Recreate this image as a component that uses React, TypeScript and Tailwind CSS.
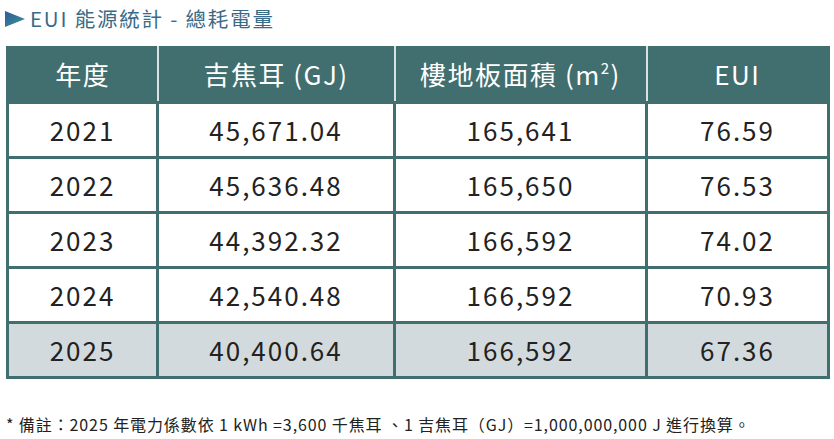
const rows = [
  { year: "2021", gj: "45,671.04", area: "165,641", eui: "76.59" },
  { year: "2022", gj: "45,636.48", area: "165,650", eui: "76.53" },
  { year: "2023", gj: "44,392.32", area: "166,592", eui: "74.02" },
  { year: "2024", gj: "42,540.48", area: "166,592", eui: "70.93" },
  { year: "2025", gj: "40,400.64", area: "166,592", eui: "67.36" },
];

export default function App() {
  return (
    <div className="w-[834px] h-[439px] bg-white overflow-hidden font-['Noto_Sans_CJK_TC','Noto_Sans',sans-serif]">
      {/* title */}
      <div className="flex items-center h-[36px] pl-[5px] pt-[1px]">
        <svg width="20" height="16" viewBox="0 0 20 16" className="mr-[5px]">
          <defs>
            <linearGradient id="tri" x1="0" y1="0" x2="1" y2="1">
              <stop offset="0" stopColor="#2c5c9c" />
              <stop offset="1" stopColor="#3f9294" />
            </linearGradient>
          </defs>
          <polygon points="0,0 20,8 0,16" fill="url(#tri)" />
        </svg>
        <span className="text-[20.5px] leading-none text-[#3a6b86] tracking-[1.8px]">EUI 能源統計 - 總耗電量</span>
      </div>

      {/* table */}
      <div className="pl-[6px] pt-[10px]">
        <table className="border-collapse w-[821px] table-fixed text-center">
          <colgroup>
            <col className="w-[150px]" />
            <col className="w-[237px]" />
            <col className="w-[252px]" />
            <col className="w-[182px]" />
          </colgroup>
          <thead>
            <tr className="bg-[#416e6e] text-white h-[56px] text-[26px] tracking-[1.5px]">
              <th className="font-normal border-x-[3px] border-[#416e6e] border-r-white/80 border-r-[2px]">年度</th>
              <th className="font-normal border-r-[2px] border-white/80">吉焦耳 (GJ)</th>
              <th className="font-normal border-r-[2px] border-white/80">
                樓地板面積 (m<sup className="text-[15px] -top-[11px]">2</sup>)
              </th>
              <th className="font-normal border-r-[3px] border-[#416e6e]">EUI</th>
            </tr>
          </thead>
          <tbody>
            {rows.map((r, i) => (
              <tr
                key={r.year}
                className={`h-[55px] text-[26px] tracking-[2px] text-[#222] ${i === rows.length - 1 ? "bg-[#d3dadd]" : "bg-white"}`}
              >
                <td className="border-[3px] border-[#416e6e]">{r.year}</td>
                <td className="border-[3px] border-[#416e6e]">{r.gj}</td>
                <td className="border-[3px] border-[#416e6e]">{r.area}</td>
                <td className="border-[3px] border-[#416e6e]">{r.eui}</td>
              </tr>
            ))}
          </tbody>
        </table>
      </div>

      {/* footnote */}
      <p className="pl-[6px] mt-[33px] text-[16px] text-[#222] tracking-[0.9px]">
        * 備註：2025 年電力係數依 1 kWh =3,600 千焦耳 、1 吉焦耳（GJ）=1,000,000,000 J 進行換算。
      </p>
    </div>
  );
}
